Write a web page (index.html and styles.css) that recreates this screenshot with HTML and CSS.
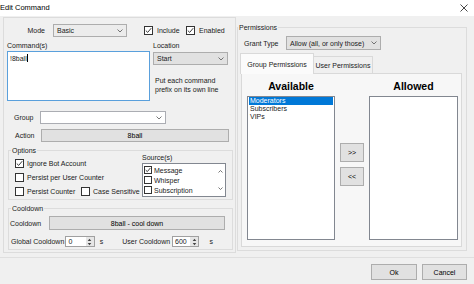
FILE: index.html
```html
<!DOCTYPE html>
<html lang="en">
<head>
    <meta charset="UTF-8">
    <title>Edit Command</title>
    <link rel="stylesheet" href="styles.css">
</head>
<body>
<div class="window">
    <div class="titlebar">
        <span class="title">Edit Command</span>
        <svg class="close" width="8" height="8" viewBox="0 0 8 8"><path d="M0.5 0.5 L7.5 7.5 M7.5 0.5 L0.5 7.5" stroke="#333" stroke-width="0.9"/></svg>
    </div>

    <div class="content">
        <div class="pane-left">
            <div class="mode-row">
                <span class="mode-label">Mode</span>
                <div class="select mode-select">
                    <span>Basic</span>
                    <svg width="6" height="4" viewBox="0 0 6 4"><path d="M0.5 0.5 L3 3 L5.5 0.5" fill="none" stroke="#555" stroke-width="0.8"/></svg>
                </div>
                <div class="check include">
                    <span class="box"><svg width="7" height="7" viewBox="0 0 7 7"><path d="M0.8 3.6 L2.7 5.4 L6.2 1.2" fill="none" stroke="#222" stroke-width="0.9"/></svg></span>
                    <span>Include</span>
                </div>
                <div class="check">
                    <span class="box"><svg width="7" height="7" viewBox="0 0 7 7"><path d="M0.8 3.6 L2.7 5.4 L6.2 1.2" fill="none" stroke="#222" stroke-width="0.9"/></svg></span>
                    <span>Enabled</span>
                </div>
            </div>

            <div class="cmd-section">
                <div class="cmd-col">
                    <div class="cmd-label">Command(s)</div>
                    <div class="textbox">!8ball<span class="caret"></span></div>
                </div>
                <div class="loc-col">
                    <div class="loc-label">Location</div>
                    <div class="select loc-select">
                        <span>Start</span>
                        <svg width="6" height="4" viewBox="0 0 6 4"><path d="M0.5 0.5 L3 3 L5.5 0.5" fill="none" stroke="#555" stroke-width="0.8"/></svg>
                    </div>
                    <p class="note">Put each command<br>prefix on its own line</p>
                </div>
            </div>

            <div class="group-row">
                <span class="row-label">Group</span>
                <div class="select white-select">
                    <span></span>
                    <svg width="6" height="4" viewBox="0 0 6 4"><path d="M0.5 0.5 L3 3 L5.5 0.5" fill="none" stroke="#555" stroke-width="0.8"/></svg>
                </div>
            </div>

            <div class="action-row">
                <span class="row-label">Action</span>
                <div class="btn action-btn">8ball</div>
            </div>

            <fieldset class="options">
                <legend>Options</legend>
                <div class="opt-body">
                    <div class="opt-left">
                        <div class="opt-row first">
                            <div class="check">
                                <span class="box"><svg width="7" height="7" viewBox="0 0 7 7"><path d="M0.8 3.6 L2.7 5.4 L6.2 1.2" fill="none" stroke="#222" stroke-width="0.9"/></svg></span>
                                <span>Ignore Bot Account</span>
                            </div>
                        </div>
                        <div class="opt-row">
                            <div class="check">
                                <span class="box"></span>
                                <span>Persist per User Counter</span>
                            </div>
                        </div>
                        <div class="opt-row">
                            <div class="check persist">
                                <span class="box"></span>
                                <span>Persist Counter</span>
                            </div>
                            <div class="check">
                                <span class="box"></span>
                                <span>Case Sensitive</span>
                            </div>
                        </div>
                    </div>
                    <div class="sources">
                        <div class="src-label">Source(s)</div>
                        <div class="listbox">
                            <div class="src-items">
                                <div class="src-item">
                                    <span class="box small"><svg width="6" height="6" viewBox="0 0 7 7"><path d="M0.8 3.6 L2.7 5.4 L6.2 1.2" fill="none" stroke="#222" stroke-width="1"/></svg></span>
                                    <span>Message</span>
                                </div>
                                <div class="src-item"><span class="box small"></span><span>Whisper</span></div>
                                <div class="src-item"><span class="box small"></span><span>Subscription</span></div>
                            </div>
                            <div class="scrollbar">
                                <svg width="5" height="3" viewBox="0 0 5 3"><path d="M0.5 2.5 L2.5 0.5 L4.5 2.5" fill="none" stroke="#555" stroke-width="0.8"/></svg>
                                <svg width="5" height="3" viewBox="0 0 5 3"><path d="M0.5 0.5 L2.5 2.5 L4.5 0.5" fill="none" stroke="#555" stroke-width="0.8"/></svg>
                            </div>
                        </div>
                    </div>
                </div>
            </fieldset>

            <fieldset class="cooldown">
                <legend>Cooldown</legend>
                <div class="cd-row">
                    <span class="cd-label">Cooldown</span>
                    <div class="btn cd-btn">8ball - cool down</div>
                </div>
                <div class="spin-row">
                    <span class="global-label">Global Cooldown</span>
                    <div class="spin global-spin">
                        <span>0</span>
                        <span class="spin-btn"><svg width="5" height="8" viewBox="0 0 5 8"><path d="M2.5 0.8 L4.3 3 L0.7 3 Z M2.5 7.2 L4.3 5 L0.7 5 Z" fill="#444"/></svg></span>
                    </div>
                    <span class="unit">s</span>
                    <span class="user-label">User Cooldown</span>
                    <div class="spin user-spin">
                        <span>600</span>
                        <span class="spin-btn"><svg width="5" height="8" viewBox="0 0 5 8"><path d="M2.5 0.8 L4.3 3 L0.7 3 Z M2.5 7.2 L4.3 5 L0.7 5 Z" fill="#444"/></svg></span>
                    </div>
                    <span class="unit user-unit">s</span>
                </div>
            </fieldset>
        </div>

        <fieldset class="perms">
            <legend>Permissions</legend>
            <div class="grant-row">
                <span class="grant-label">Grant Type</span>
                <div class="select grant-select">
                    <span>Allow (all, or only those)</span>
                    <svg width="6" height="4" viewBox="0 0 6 4"><path d="M0.5 0.5 L3 3 L5.5 0.5" fill="none" stroke="#555" stroke-width="0.8"/></svg>
                </div>
            </div>
            <div class="tabs">
                <div class="tab active">Group Permissions</div>
                <div class="tab">User Permissions</div>
            </div>
            <div class="tab-panel">
                <div class="perm-col avail-col">
                    <h2>Available</h2>
                    <div class="list">
                        <div class="list-item selected">Moderators</div>
                        <div class="list-item">Subscribers</div>
                        <div class="list-item">VIPs</div>
                    </div>
                </div>
                <div class="mid-col">
                    <div class="btn move-btn">&gt;&gt;</div>
                    <div class="btn move-btn">&lt;&lt;</div>
                </div>
                <div class="perm-col allowed-col">
                    <h2>Allowed</h2>
                    <div class="list"></div>
                </div>
            </div>
        </fieldset>
    </div>

    <div class="footer">
        <div class="btn ok-btn">Ok</div>
        <div class="btn cancel-btn">Cancel</div>
    </div>
</div>
</body>
</html>
```

FILE: styles.css
```css
* {
    box-sizing: border-box;
}

body {
    margin: 0;
    background-color: #f0f0f0;
    font-family: "Liberation Sans", Arial, sans-serif;
    font-size: 7px;
    color: #1a1a1a;
}

.window {
    width: 474px;
    height: 284px;
    display: flex;
    flex-direction: column;
}

.titlebar {
    height: 16px;
    background-color: #fff;
    display: flex;
    align-items: center;
    justify-content: space-between;
    padding: 0 6px 1px 0;
}

.title {
    font-size: 7.5px;
    color: #000;
}

.content {
    height: 241px;
    display: flex;
    padding-left: 3px;
}

/* left side */
.pane-left {
    width: 233px;
    height: 236px;
    margin-top: 1px;
    border: 1px solid #dcdcdc;
    padding-top: 6px;
}

.mode-row {
    display: flex;
    align-items: center;
    height: 13px;
}

.mode-label {
    width: 41px;
    text-align: right;
}

.select {
    height: 13px;
    display: flex;
    align-items: center;
    justify-content: space-between;
    padding: 0 3px 0 3px;
    border: 1px solid #adadad;
    background-color: #e5e5e5;
}

.mode-select {
    margin-left: 8px;
    width: 74px;
    background-color: #ececec;
}

.check {
    display: flex;
    align-items: center;
    gap: 4px;
}

.opt-row .check {
    gap: 3px;
}

.box {
    width: 9px;
    height: 9px;
    border: 1px solid #333;
    background-color: #fff;
    display: flex;
    align-items: center;
    justify-content: center;
}

.box.small {
    width: 8px;
    height: 8px;
}

.include {
    margin-left: 17px;
    width: 42px;
}

.cmd-section {
    display: flex;
    margin-top: 4px;
}

.cmd-col {
    margin-left: 3px;
    width: 143px;
}

.cmd-label {
    height: 10px;
    line-height: 10px;
}

.textbox {
    height: 50px;
    border: 1px solid #5aa0dc;
    background-color: #fff;
    padding: 2px 2px;
    line-height: 9px;
}

.caret {
    display: inline-block;
    width: 1px;
    height: 8px;
    background-color: #000;
    vertical-align: -1px;
}

.loc-col {
    margin-left: 3px;
    width: 75px;
}

.loc-label {
    height: 11px;
    line-height: 10px;
}

.loc-select {
    background-color: #e1e1e1;
}

.note {
    margin: 11px 0 0 0;
    padding-left: 2px;
    line-height: 9px;
}

.group-row {
    display: flex;
    align-items: center;
    margin-top: 10px;
    padding-left: 10px;
    height: 13px;
}

.row-label {
    width: 26px;
}

.white-select {
    width: 126px;
    background-color: #fff;
    border-color: #abadb3;
}

.action-row {
    display: flex;
    align-items: center;
    margin-top: 5px;
    padding-left: 11px;
    height: 13px;
}

.btn {
    display: flex;
    align-items: center;
    justify-content: center;
    background-color: #e1e1e1;
    border: 1px solid #adadad;
    color: #000;
}

.action-btn {
    width: 188px;
    height: 13px;
}

fieldset {
    border: 1px solid #dcdcdc;
    margin: 0;
    padding: 0;
    min-width: 0;
}

legend {
    padding: 0 1px;
    line-height: 9px;
}

.options {
    margin: 4px 0 0 4px;
    width: 225px;
    height: 54px;
}

.options legend,
.cooldown legend {
    margin-left: 2px;
}

.opt-body {
    display: flex;
}

.opt-left {
    margin-left: 6px;
    width: 127px;
}

.opt-row {
    display: flex;
    align-items: center;
    height: 14px;
}

.opt-row.first {
    margin-top: 1px;
}

.persist {
    width: 66px;
}

.sources {
    margin-top: -2px;
    width: 84px;
}

.src-label {
    height: 10px;
    line-height: 10px;
}

.listbox {
    height: 34px;
    border: 1px solid #828790;
    background-color: #fff;
    display: flex;
    padding: 1px 0 0 1px;
}

.src-items {
    flex: 1;
}

.src-item {
    height: 10px;
    display: flex;
    align-items: center;
    gap: 2px;
}

.scrollbar {
    width: 10px;
    display: flex;
    flex-direction: column;
    justify-content: space-between;
    align-items: center;
    padding: 5px 0 6px 0;
}

.cooldown {
    margin: 4px 0 0 4px;
    width: 225px;
    height: 46px;
}

.cd-row {
    display: flex;
    align-items: center;
    margin-top: 3px;
    height: 14px;
}

.cd-label {
    margin-left: 1px;
    width: 39px;
}

.cd-btn {
    width: 176px;
    height: 14px;
}

.spin-row {
    display: flex;
    align-items: center;
    margin-top: 6px;
    height: 11px;
}

.global-label {
    margin-left: 2px;
    width: 58px;
}

.spin {
    height: 11px;
    display: flex;
    align-items: center;
    justify-content: space-between;
    border: 1px solid #a0a0a0;
    background-color: #fff;
    padding-left: 2px;
}

.global-spin {
    width: 31px;
}

.user-spin {
    width: 29px;
}

.spin-btn {
    width: 8px;
    height: 9px;
    background-color: #e6e6e6;
    display: flex;
    align-items: center;
    justify-content: center;
}

.unit {
    margin-left: 5px;
    width: 24px;
}

.user-label {
    width: 53px;
}

.user-unit {
    margin-left: 10px;
}

/* right side */
.perms {
    margin: 7px 0 0 1px;
    width: 230px;
    height: 228px;
}

.grant-row {
    display: flex;
    align-items: center;
    margin-top: 4px;
    height: 14px;
}

.grant-label {
    margin-left: 6px;
    width: 42px;
}

.grant-select {
    width: 95px;
    height: 14px;
    background-color: #e1e1e1;
}

.tabs {
    display: flex;
    align-items: flex-end;
    margin: 3px 0 0 2px;
}

.tab {
    height: 17px;
    width: 59px;
    display: flex;
    align-items: center;
    justify-content: center;
    border: 1px solid #d9d9d9;
    border-left: none;
    border-bottom: none;
}

.tab.active {
    width: 74px;
    height: 21px;
    border-left: 1px solid #d9d9d9;
    background-color: #fbfbfb;
    margin-bottom: -1px;
    position: relative;
    z-index: 1;
}

.tab-panel {
    margin-left: 3px;
    width: 221px;
    height: 174px;
    border: 1px solid #d9d9d9;
    background-color: #f7f7f7;
    display: flex;
    padding: 4px 0 0 5px;
}

.perm-col h2 {
    margin: 0;
    height: 16px;
    line-height: 16px;
    font-size: 10.5px;
    text-align: center;
    color: #000;
}

.avail-col {
    width: 88px;
}

.allowed-col {
    width: 89px;
}

.list {
    margin-top: 2px;
    height: 144px;
    border: 1px solid #828790;
    background-color: #fff;
    padding: 0 1px;
}

.list-item {
    height: 8px;
    line-height: 8px;
    padding-left: 1px;
}

.list-item.selected {
    background-color: #0078d7;
    color: #fff;
}

.mid-col {
    width: 34px;
    display: flex;
    flex-direction: column;
    align-items: center;
    gap: 5px;
    padding-top: 65px;
}

.move-btn {
    width: 24px;
    height: 19px;
}

.footer {
    height: 27px;
    border-top: 1px solid #dfdfdf;
    display: flex;
    justify-content: flex-end;
    gap: 5px;
    padding: 6px 7px 0 0;
}

.ok-btn {
    width: 46px;
    height: 16px;
}

.cancel-btn {
    width: 45px;
    height: 16px;
}
```
